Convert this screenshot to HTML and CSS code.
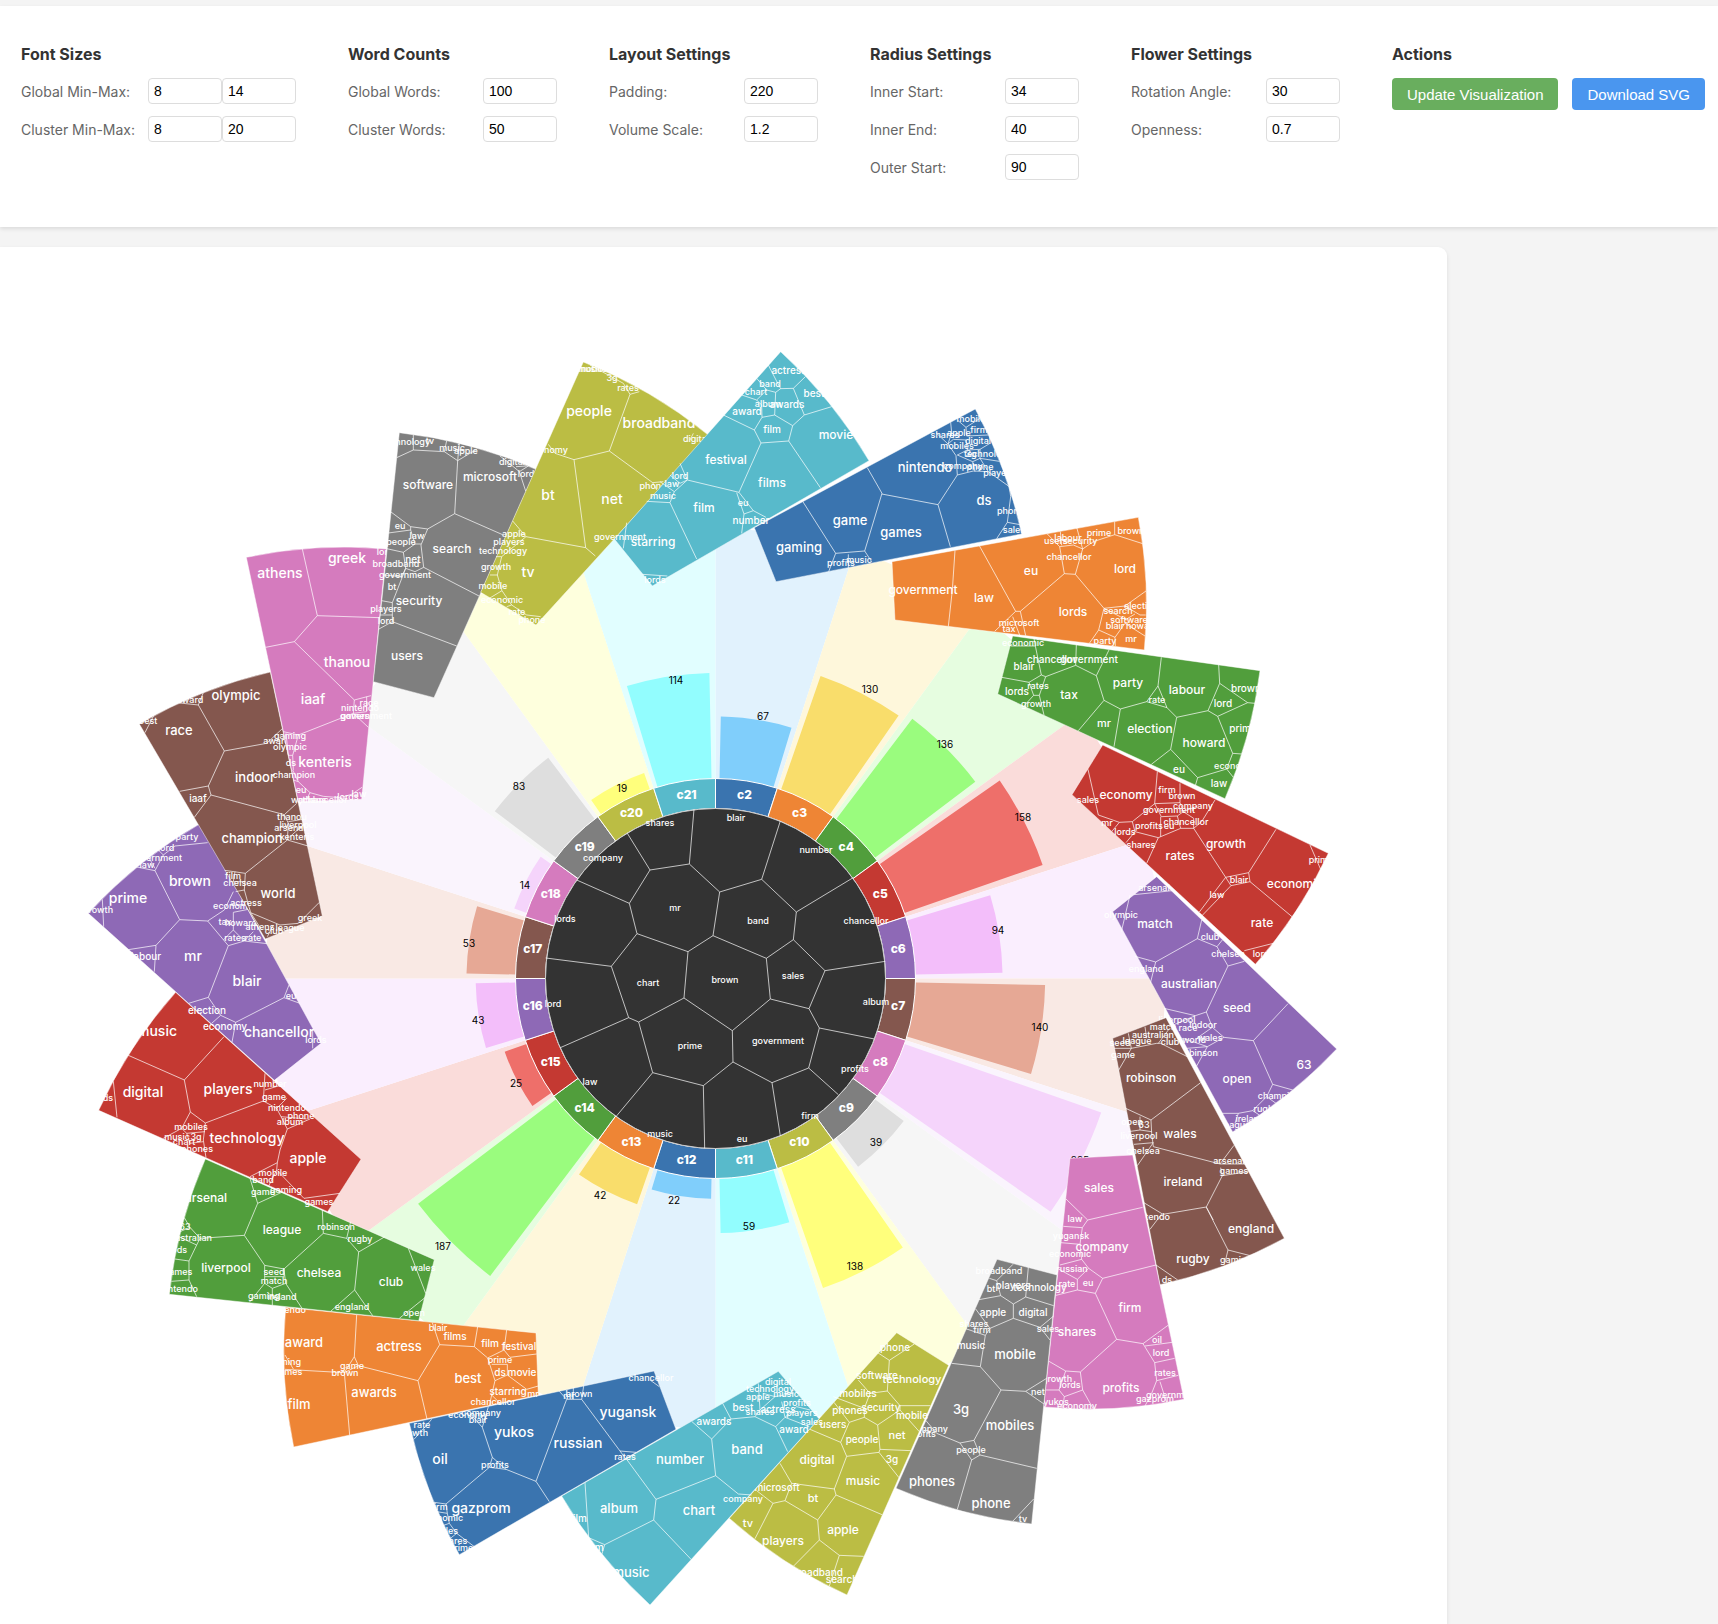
FILE: index.html
```
<!DOCTYPE html>
<html lang="en">
<head>
<meta charset="utf-8">
<meta name="viewport" content="width=device-width, initial-scale=1">
<title>Cluster Flower</title>
<link rel="stylesheet" href="styles.css">
</head>
<body>
<form class="controls">
  <section class="group group-wide">
    <h2>Font Sizes</h2>
    <div class="field">
      <label for="global-min">Global Min-Max:</label>
      <span class="pair"><input id="global-min" type="number" value="8"><input type="number" value="14" aria-label="Global maximum"></span>
    </div>
    <div class="field">
      <label for="cluster-min">Cluster Min-Max:</label>
      <span class="pair"><input id="cluster-min" type="number" value="8"><input type="number" value="20" aria-label="Cluster maximum"></span>
    </div>
  </section>
  <section class="group">
    <h2>Word Counts</h2>
    <div class="field"><label for="global-words">Global Words:</label><input id="global-words" type="number" value="100"></div>
    <div class="field"><label for="cluster-words">Cluster Words:</label><input id="cluster-words" type="number" value="50"></div>
  </section>
  <section class="group">
    <h2>Layout Settings</h2>
    <div class="field"><label for="padding">Padding:</label><input id="padding" type="number" value="220"></div>
    <div class="field"><label for="volume">Volume Scale:</label><input id="volume" type="number" step="0.1" value="1.2"></div>
  </section>
  <section class="group">
    <h2>Radius Settings</h2>
    <div class="field"><label for="inner-start">Inner Start:</label><input id="inner-start" type="number" value="34"></div>
    <div class="field"><label for="inner-end">Inner End:</label><input id="inner-end" type="number" value="40"></div>
    <div class="field"><label for="outer-start">Outer Start:</label><input id="outer-start" type="number" value="90"></div>
  </section>
  <section class="group">
    <h2>Flower Settings</h2>
    <div class="field"><label for="rotation">Rotation Angle:</label><input id="rotation" type="number" value="30"></div>
    <div class="field"><label for="openness">Openness:</label><input id="openness" type="number" step="0.1" value="0.7"></div>
  </section>
  <section class="actions">
    <h2>Actions</h2>
    <div class="buttons">
      <button type="button" class="button button-update">Update Visualization</button>
      <button type="button" class="button button-download">Download SVG</button>
    </div>
  </section>
</form>
<main class="panel">
  <svg id="flower" class="flower" viewBox="0 247 1447 1377" role="img" aria-label="Word clusters arranged as a flower"></svg>
</main>
<script src="app.js"></script>
</body>
</html>
```
FILE: styles.css
```
* {
  box-sizing: border-box;
}

body {
  margin: 0;
  padding-top: 6px;
  background: #f4f4f4;
  font-family: Inter, "Noto Sans", sans-serif;
  color: #333;
}

.controls {
  display: flex;
  flex-wrap: wrap;
  gap: 20px 52px;
  padding: 38px 8px 47px 21px;
  background: #fff;
  box-shadow: 0 2px 4px rgba(0, 0, 0, 0.1);
}

.group {
  display: flex;
  flex-direction: column;
  gap: 12px;
  width: 209px;
}

.group-wide {
  width: 275px;
}

h2 {
  margin: 0;
  font-size: 16px;
  line-height: 20px;
  font-weight: 700;
}

.group h2 {
  margin-bottom: 2px;
}

.field {
  display: flex;
  align-items: center;
  justify-content: space-between;
  height: 26px;
  font-size: 14px;
  color: #666;
}

.pair {
  display: flex;
}

input {
  width: 74px;
  height: 26px;
  padding: 0 5px;
  border: 1px solid #ddd;
  border-radius: 4px;
  background: #fff;
  color: #000;
  font: 14px "Liberation Sans", Arial, sans-serif;
  appearance: textfield;
}

.actions h2 {
  margin-bottom: 14px;
}

.buttons {
  display: flex;
  gap: 14px;
}

.button {
  height: 32px;
  padding: 0 15px;
  border: 0;
  border-radius: 4px;
  color: #fff;
  font: 15px "Liberation Sans", Arial, sans-serif;
}

.button-update {
  background: #69ae5e;
}

.button-download {
  background: #4a96ef;
}

.panel {
  margin: 20px 271px 0 0;
  background: #fff;
  border-radius: 0 9px 0 0;
  box-shadow: 0 2px 4px rgba(0, 0, 0, 0.1);
}

.flower {
  display: block;
  width: 100%;
  height: auto;
}

.flower text {
  text-anchor: middle;
}

.word {
  fill: #fff;
  font-weight: 500;
}

.cells {
  fill: none;
  stroke: rgba(255, 255, 255, 0.7);
  stroke-width: 3px;
}

.petal {
  stroke: rgba(255, 255, 255, 0.7);
  stroke-width: 2px;
}

.ring {
  stroke: #fff;
  stroke-width: 1px;
}

.ring-label {
  fill: #fff;
  font-size: 12px;
  font-weight: 800;
}

.value {
  fill: #000;
  font-size: 10px;
}

.hub {
  fill: #333;
  stroke: #ccc;
  stroke-width: 1px;
}
```
FILE: app.js
```
const CX = 715.5, CY = 978.5;
const INNER = 170, RING = 200, OUTER = 450, VALUE_SCALE = 0.9259, STEP = 18;

// ring colour, bar colour, background tint
const PALETTE = [
  ['#3a74af', '#80cefb', '#e1f2fd'],
  ['#ee8535', '#f9dd6b', '#fef7db'],
  ['#519e3c', '#9afc7e', '#e6fde0'],
  ['#c43932', '#ee6f6a', '#fadcda'],
  ['#8e69b6', '#f3befa', '#faeefe'],
  ['#84574e', '#e6a895', '#f9e9e4'],
  ['#d57bbe', '#f5d4fb', '#faf4fd'],
  ['#7f7f7f', '#dedede', '#f6f6f6'],
  ['#bbbd44', '#ffff7c', '#feffdd'],
  ['#58bacb', '#92fdfe', '#e1feff']
];

// value and label centre for each cluster, c2 first
const VALUES = [
  [67, 763, 716], [130, 870, 689], [136, 945, 744], [158, 1023, 817], [94, 998, 930],
  [140, 1040, 1027], [225, 1080, 1160], [39, 876, 1142], [138, 855, 1266], [59, 749, 1226],
  [22, 674, 1200], [42, 600, 1195], [187, 443, 1246], [25, 516, 1083], [43, 478, 1020],
  [53, 469, 943], [14, 525, 885], [83, 519, 786], [19, 622, 788], [114, 676, 680]
];

// origins of the drawing tiles; data inside a tile is in thirds of a unit
const TILES = {
  a: [80, 340], b: [480, 340], c: [880, 390], d: [80, 740], e: [500, 740],
  f: [910, 790], g: [140, 1150], h: [530, 1180], i: [880, 1160]
};

// each petal: tile of the outline, outline corners, then [tile, cell borders, words]
const PETALS = [
  ['b', [823, 563, 1486, 207, 1625, 582, 888, 725],
    ['b', 'M968 484L1067 640L1154 633L1206 460L1162 383M1067 640L1046 695M1105 643V684M1154 633L1175 665',
      'gaming 958 622 13;game 1110 541 13;music 1137 660;profits 1082 669'],
    ['c', 'M5 312L174 344L232 255L228 197L204 162L168 128M174 344L211 470M232 255L280 243L325 245L388 290L392 320L382 397L350 446M382 397L420 404M212 97L215 128L204 162L220 148L258 150L262 180L232 195L278 215L300 205L358 214M232 90L258 112L300 85M258 112L260 138L325 135M262 180L300 178L330 160M300 178V205L325 245M278 215L285 245',
      'nintendo 136 232 13;games 64 427 13;ds 311 330 13;mobile 272 87;apple 238 127;firm 296 119;shares 196 134;digital 294 153;mobiles 232 167;3g 272 191;technology 325 191;company 250 226;phone 300 231;players 356 248;phones 398 363;sales 402 420']],
  ['c', [36, 515, 775, 382, 793, 780, 45, 690],
    ['c', 'M225 482L217 600L205 709M298 467L407 664L421 664L553 551L586 553L672 655L656 720L628 760M407 664L344 724M398 680L420 738M421 664L437 737M553 551L539 470L500 430M586 553L608 477L590 412M539 470L580 465L608 477L640 455L704 434L788 461M704 434V395M672 655L735 648L798 603M735 648L780 675H797M735 690L765 672M656 720L705 742L735 700L795 738M705 742L706 768M672 655L740 690M541 425L545 466',
      'government 128 599 12;law 312 623 12;eu 452 542 12;lord 735 535 12;lords 578 664 12;users 528 453;labour 563 444;security 601 451;prime 657 428;brown 754 422;chancellor 568 499;search 713 663;election 784 648;software 746 690;blair 704 708;howard 785 708;mr 754 745;party 675 753;microsoft 417 699;tax 387 717']],
  ['c', [398, 738, 1140, 842, 1035, 1226, 353, 912],
    ['c', 'M365 862L447 877L484 855L466 768H392M466 768L462 745M484 855L497 860L587 826L649 857L687 780M587 826L589 765M447 877L461 916H478L497 860M461 916L430 950M478 916L492 975M649 857L672 931L721 957L800 935L834 888L844 802M672 931L595 1022M721 957L702 1070M834 888L861 953L800 935M861 953L890 982L984 962L1019 880L1016 825M1019 880L1103 938L1125 940M1103 938L1013 979L984 962M1013 979L1058 1090L1085 1092M890 982L872 1078L953 1163L1040 1137L1058 1090M872 1078L814 1123M953 1163L946 1187M1040 1137L1060 1162',
      'economic 430 759;chancellor 516 808 10;government 628 808 10;blair 431 829 10;tax 566 915 12;rates 474 888;growth 467 942;lords 412 905 10;party 744 879 12;labour 920 899 12;rate 832 930;mr 672 1000 11;election 809 1016 12;howard 971 1058 12;lord 1029 940 10;brown 1099 895 10;prime 1090 1015 10;eu 896 1138 10;economy 1062 1128;law 1016 1180 10']],
  ['f', [578, -135, 1255, 190, 1036, 523, 486, 14],
    ['f', 'M534 -62L565 75L628 97L667 95L734 41L742 -55M734 41L810 38L820 65L862 48M810 -20V38M667 95L675 125L745 143L812 115H851L875 95L915 30M851 115L947 262L1016 248L1098 118M947 262L868 366M1016 248L1020 275L963 287L875 378M947 262L963 287M1020 275L1146 380M1200 165L1232 238M1003 482L1090 460M745 143L710 220M628 97L605 125M675 125L648 158M752 80V140M734 41L754 80L802 78L812 115M802 78L820 65L851 85V115',
      'economy 648 15 12;growth 947 161 12;rates 811 197 12;rate 1056 398 12;economic 1156 281 12;sales 535 29;firm 772 0;brown 817 18;company 850 47;government 777 60;chancellor 827 96;profits 718 106;eu 777 108;mr 592 99;lords 644 126;shares 693 164;blair 987 270;law 920 315;prime 1233 210;lord 1052 491']],
  ['f', [740, 260, 1280, 777, 968, 1026, 608, 365],
    ['f', 'M672 314L787 302M660 315L634 425M675 499L737 516L862 446L875 390M737 516L721 580M862 446L921 470L937 450M921 470L954 528L1003 514M954 528L889 666L856 677L762 655M889 666L907 712L942 742L1030 752L1134 641M1030 752L1088 883L1148 900M1088 883L1070 920L1028 962L985 970H935M1070 920L1098 940M1028 962L1048 975M942 742L892 770L860 828M892 770L820 745M907 712L860 745M856 677L790 705M985 970L975 1000M830 775L892 770',
      'arsenal 733 294;olympic 632 375;match 736 401 12;club 899 440;chelsea 953 492;england 709 537;australian 836 581 12;seed 980 653 12;63 1182 824 12;open 981 865 12;liverpool 800 690;indoor 878 705;race 833 714;world 853 750;wales 900 744;robinson 866 789;champion 1108 918;rugby 1068 957;ireland 1020 987;league 978 1003']],
  ['f', [768, 683, 1123, 1345, 750, 1484, 608, 745],
    ['f', 'M612 775H664L740 760H752L832 800M664 775L625 842M647 955L723 990L872 878M723 990L725 1030L730 1070L930 1122L972 1066M930 1122H1005M932 1133L937 1157L1015 1145M937 1157L889 1251L759 1273L700 1237M889 1251L910 1290M672 1063L730 1058L682 1127M690 980V1020L655 1025M690 1020L725 1025M705 710L710 745M775 720L745 760M655 730L664 775',
      'match 760 711;australian 730 735;league 680 752;seed 631 759;club 780 756;game 639 795;robinson 723 862 12;wales 810 1031 12;open 667 996;63 703 1004;liverpool 688 1038;chelsea 700 1082;ireland 818 1174 12;arsenal 958 1113;games 972 1142'],
    ['i', 'M979 142L1044 270L1111 287M1044 270L1035 307M828 315L893 360M845 162L810 208',
      'england 1112 206 12;rugby 939 296 12;gaming 1068 300;ds 862 360;nintendo 812 171']],
  ['i', [758, -15, 912, 718, 491, 741, 570, -5],
    ['i', 'M558 117L623 180L788 142M623 180L607 203L550 199M607 203L600 253L543 248M600 253L605 298L540 315M605 298L626 325L668 355L828 315M626 325L592 358V390L528 406M592 358L532 325M592 390L646 400L668 355M646 400L710 538L789 551L864 496M710 538L601 636L557 633L507 604M557 633L537 690H497M601 636L608 690L553 710L537 690M553 710L548 743M608 690L640 747M789 551L824 608L830 662L895 646M795 558L877 547M824 608L884 595M830 662L815 700L795 738M840 665L860 728',
      'sales 658 83 12;law 584 177;yugansk 574 228;company 667 261 12;economic 569 282;russian 577 327;rate 561 372;eu 624 369;firm 750 443 12;shares 592 516 12;oil 831 540;lord 844 578;rates 855 639;profits 724 683 12;growth 530 657;lords 571 675;yukos 527 726;economy 592 738;government 875 705;gazprom 825 717']],
  ['i', [531, 345, 455, 1092, 48, 985, 351, 298],
    ['i', 'M399 313L350 362L328 355M350 362L362 407L297 419M445 322L437 411L521 437M362 407L400 432L437 411M400 432V475L330 505L316 526M400 475L480 502L521 468M480 502L510 540M287 447L330 505M257 506L316 526L301 620L215 610M301 620L363 690L437 694L500 655M437 694L492 732M363 690L282 841L300 885L470 925M282 841L240 849L275 900L300 885M240 849L170 820L138 782M275 900L232 1048M461 1017L398 1084',
      'broadband 356 333;players 399 377 10;technology 481 382 10;bt 334 386;apple 340 457 10;digital 460 457 10;shares 281 490;firm 307 510;sales 503 507;music 273 556 10;mobile 404 583 13;net 475 696;3g 244 748 13;mobiles 390 796 13;company 143 806;profits 125 822;people 274 870;phones 156 964 13;phone 333 1030 13;tv 429 1077']],
  ['h', [1256, 556, 951, 1245, 598, 1015, 1100, 458],
    ['h', 'M1043 518L1078 541L1153 492M1078 541L1072 633L1110 677H1201M1072 633L1020 640L985 600M1020 640L1003 685L910 650M1003 685V712L958 727L912 667M1003 712L1043 735L1110 690V677M1110 690L1168 755M1043 735L1050 808L1143 812M1050 808L1047 817L950 829L932 787L840 748M958 727L932 787M950 829L913 927L918 945L1056 1004M913 927L785 910L750 850M785 910L765 962L729 970L680 932M765 962L863 1020L918 945M863 1020L868 1080L928 1126L1001 1129M868 1080L791 1158M928 1126L898 1218M729 970L675 1076M1047 817L1107 893',
      'phone 1095 503 10;software 1040 587 10;technology 1146 597 11;mobiles 984 641 10;security 1052 682 10;phones 959 690 10;mobile 1147 705 10;users 909 733 10;people 997 778 10;net 1102 766 11;3g 1086 837 10;digital 860 839 12;music 998 903 12;bt 848 955 11;microsoft 740 922 10;tv 654 1030 11;players 758 1083 12;apple 939 1050 12;broadband 860 1177 10;search 937 1198 10']],
  ['h', [867, 716, 360, 1275, 95, 948, 745, 574],
    ['h', 'M578 670L603 717L675 710L690 690L685 610M603 717L545 777L486 725M545 777L557 887L378 958L290 838M557 887L625 942L665 945M378 958L371 1020L224 1094L176 1073L165 908M371 1020L484 1139M224 1094L215 1125M675 710L737 740L773 815M737 740L765 712L838 740M690 690L735 650L790 640M765 712L800 680L840 690M735 650L700 640M765 712L755 665',
      'digital 745 605;technology 719 627;music 769 640;apple 685 651;profits 800 668;best 638 682 10;shares 690 696;actress 744 688 10;players 815 699;sales 845 726;awards 551 724 10;award 793 748 10;number 450 837 13;band 652 807 13;chart 508 990 13;album 266 985 13;company 639 957;film 145 1015 10;firm 193 1102 10;music 302 1176 13']],
  ['h', [438, 748, -212, 1124, -362, 730, 372, 573],
    ['h', 'M161 618L155 658H110L88 634M155 658L270 813L318 817M270 813L290 840M110 658L18 904L58 965M360 600L388 620M130 622V658M18 904L-72 868',
      'chancellor 363 594;brown 147 642;mr 116 648;yugansk 295 695 14;russian 144 789 14;rates 285 831'],
    ['g', 'M875 808L822 868M990 790L1027 832L1057 922L1098 958M1057 922L1048 952L918 1062L882 1057M1048 952L1098 958M918 1062L922 1090L890 1085M922 1090L928 1120L905 1128M928 1120L950 1150L925 1170M950 1150L1003 1190M1027 832L1045 770',
      'yukos 1123 846 14;oil 899 927 14;gazprom 1023 1074 14;profits 1064 945;economy 984 793;company 1023 787;blair 1013 810;rate 845 825;growth 819 847;firm 898 1071;economic 907 1104;sales 922 1143;shares 940 1173;prime 962 1193']],
  ['g', [1195, 735, 461, 891, 437, 472, 1188, 549],
    ['g', 'M650 495L643 620L655 647L834 692L899 584L877 518M899 584L1003 590L1013 530M1003 590L1043 624L1065 692L1055 735L1048 768M834 692L861 807M613 668L629 855M435 658L613 668L643 620M1100 540L1092 600L1110 622L1190 612M1092 600L1043 624M1055 643H1102V675L1065 692M1102 675L1160 718L1195 708M1055 735L1085 765M435 615L460 657M613 668L655 647',
      'nintendo 441 480;award 493 577 13;actress 778 588 13;awards 702 726 13;best 984 684 13;film 478 762 13;game 635 646;brown 614 669;gaming 436 636;games 444 666;blair 895 534;films 945 559 10;film 1050 580 10;festival 1136 588 10;prime 1080 630;ds 1080 666 10;movie 1145 666 10;starring 1105 724 10;mr 1178 730;chancellor 1058 756']],
  ['g', [836, 512, 88, 433, 196, 27, 883, 329],
    ['g', 'M313 256L180 265L150 232L133 203M313 256L353 160L330 85M353 160L425 127M180 265L170 285L120 262M170 285L147 333L104 327M147 333V390L94 394M147 390L170 440M313 256L374 346L432 357L550 250L547 180M550 250L620 265L656 306L735 260M620 265L632 215M656 306L644 420L698 497M644 420L572 484M374 346V400L328 457M374 380H432V357L437 400L397 415L374 400M397 415V467M437 400L486 475M805 295L857 430M855 443L778 505M150 232L120 245',
      'arsenal 199 144 12;league 427 240 12;liverpool 257 354 12;chelsea 536 369 12;club 753 396 12;robinson 589 231;rugby 661 267;wales 849 354;open 822 489;england 637 471;seed 403 366;match 401 393;gaming 372 438;ireland 427 441;game 370 126;63 135 231;australian 152 264;ds 125 300;games 115 366;nintendo 118 417']],
  ['d', [743, 1415, 56, 1111, 287, 757, 843, 1258],
    ['d', 'M145 946L313 1020L432 890M313 1020L331 1116L376 1149L550 1083L555 1000M100 1024L111 1132M331 1116L305 1165L250 1195M376 1149L370 1200L378 1253M550 1083L590 1105L603 1130L680 1137M555 1050L605 1035M590 1105L620 1075M603 1130L622 1167L600 1230L592 1268M622 1167L690 1137M305 1165L320 1180L375 1175M320 1180L330 1210L370 1205',
      'music 231 873 14;digital 190 1056 14;players 444 1047 14;technology 500 1194 14;apple 683 1252 14;ds 85 1073;number 571 1031;game 582 1070;nintendo 622 1103;phone 664 1127;album 629 1146;mobiles 333 1161;music 290 1191;3g 347 1191;chart 313 1204;phones 350 1226'],
    ['g', 'M412 38L330 80M412 38L410 60L385 110M410 60L492 145L600 130',
      'mobile 399 69;band 369 89;gaming 437 119;games 536 155']],
  ['d', [583, 1021, 25, 520, 362, 250, 723, 910],
    ['d', 'M383 308L285 318L250 345L225 392L299 539L383 543L433 510L460 455M225 392L165 380M250 345L235 330M225 385L205 350M299 539L228 616L145 629M228 616L223 695M383 543L445 617L385 772L326 790M445 617L493 603L562 611M460 517V570L430 600M460 570L493 603L520 575M460 517L520 505M385 772L422 826L467 847L612 773L660 790M612 773L627 735M422 826L395 850M467 847L456 907M67 478L71 560M698 870V925',
      'party 321 291;lord 257 324;government 229 354;law 200 375;brown 329 423 14;prime 145 474 14;growth 54 510;economy 458 497;tax 434 546;howard 482 547;rates 464 594;rate 520 594;labour 198 650 10;mr 340 648 14;blair 502 723 14;eu 634 768;election 382 812 10;economy 434 860 10;chancellor 598 876 14;lords 709 900']],
  ['d', [556, 597, 178, -48, 571, -204, 727, 528],
    ['a', 'M195 1178L222 1125M370 1058L355 1095L290 1088M355 1095L433 1233L560 1210L608 1165',
      'olympic 468 1066 13;race 296 1171 13;award 331 1080;best 205 1143'],
    ['d', 'M433 33L385 138L393 165L343 232M385 138L299 154M393 165L613 224L650 190M613 224L625 250L622 300L684 318M622 300L496 400L434 391M496 400L493 450L512 518L600 555L655 550L718 487M493 450L467 455M512 518L545 570M580 555L562 590M625 245L668 238M630 290L675 250M465 395L460 425H495',
      'indoor 525 112 13;awards 598 3;champion 515 295 13;world 595 460 13;iaaf 354 176 10;thanou 637 231;liverpool 655 255;arsenal 630 264;kenteris 650 291;film 459 408;chelsea 481 429;actress 497 489;greek 690 534;athens 541 561;league 630 564;club 583 573']],
  ['a', [655, 1385, 499, 652, 919, 627, 845, 1378],
    ['a', 'M667 627L712 827L898 833M712 827L643 905L557 922M643 905L823 1080L873 1067M823 1080L820 1120L865 1162M820 1120L655 1185L610 1175M655 1185L638 1246L640 1290M860 1070V1115L820 1120M618 1180L625 1246H638',
      'athens 600 697 14;greek 800 654 14;thanou 801 965 14;iaaf 700 1076 14;race 866 1089;nintendo 840 1104;government 857 1128;games 825 1128;gaming 631 1188;olympic 631 1221;ds 632 1269;kenteris 736 1266 14;lord 914 636'],
    ['d', 'M638 90L655 125L690 158L730 169L780 173L815 163L846 142M655 125L640 120M690 158L680 178',
      'champion 642 105;eu 664 150;world 668 180;athens 695 178;chancellor 735 178;lords 803 171;law 838 162']],
  ['a', [880, 1025, 958, 278, 1368, 388, 1062, 1073],
    ['a', 'M950 353L1000 330L1093 335L1133 362L1190 328M1000 330V284M1093 335L1100 302M1133 362L1124 521L1043 567L992 560L933 516M1133 362L1138 308M1124 521L1270 585M1043 567L1023 615L1031 682L1197 768M992 560V570L925 579M992 570L1005 612H1023M1005 612L970 637L920 626M970 637L977 685L1005 695L1031 682M977 685L937 788L905 782M937 788V845L1130 918M937 845L895 868M977 685L965 710L910 705M900 825H937',
      'technology 979 305;tv 1049 303;music 1117 324;apple 1158 333;software 1044 433 12;search 1115 626 12;security 1018 783 12;users 981 947 12;microsoft 1231 411 12;eu 960 557;law 1012 588;people 962 606;net 1000 657 10;broadband 947 671;government 975 705;bt 936 740;players 919 807;lord 918 843'],
    ['b', 'M60 348L82 365L118 395L137 453M108 380L140 378M118 395L145 378',
      'digital 95 366;lord 137 402']],
  ['b', [2, 757, 310, 66, 686, 286, 168, 855],
    ['b', 'M205 313L225 340L282 359L388 333L450 163L478 155M450 163L430 130L330 75M388 333L518 428L550 425M518 428L530 450M282 359L317 623L346 648M317 623L138 590L98 543M138 590L65 650H48M65 650L52 705L66 752L28 775M52 705H30M66 752L95 795L140 825L182 830M95 795L80 800M640 280L630 300',
      'people 328 213 14;broadband 538 249 14;bt 204 465 14;net 395 477 14;tv 144 696 14;music 330 87;mobiles 345 87;3g 397 112;rates 445 144;digital 648 297;economy 203 330;apple 103 582;players 87 606;technology 68 633;growth 49 681;mobile 39 738;economic 66 779;rate 110 816;phone 156 840;phone 520 438']],
  ['b', [403, 597, 902, 35, 1167, 362, 517, 738],
    ['b', 'M865 75L888 120L902 146L940 145L976 110M830 115L860 150L887 157L902 146M940 145L973 225L1055 200M973 225L938 257L884 225L887 157M938 257L926 303L1021 443M926 303L843 309L823 270L846 232L884 225M846 232L845 195L830 180L860 150M823 270L730 225M785 165L830 180M843 309L777 457L622 420L600 370M770 458L792 522L785 580M777 457L820 512L858 532M792 522L820 512M622 420L583 455L540 425M583 455L570 488L500 484M570 488L650 657M570 405L600 430L622 420M440 548L430 625M487 703L562 708',
      'actress 928 92 10;band 869 131;chart 827 156;best 1003 160 10;album 865 191;awards 921 193 10;award 802 215 10;film 876 268 10;movie 1069 284 12;festival 738 359 12;films 875 428 12;film 672 502 12;starring 520 605 12;lord 600 408;law 576 432;music 549 467;eu 789 489;number 814 540 10;lords 524 720;government 421 591']]
];

const HUB = ['e', 'M582 208L568 372L659 456L639 587L564 635L411 581L388 490L450 390L568 372M450 390L382 280M388 490L230 420M659 456L785 418L841 243M785 418L889 516L1058 414M889 516L880 599L975 692L1156 664M880 599L799 655L639 587M799 655L811 777L927 806L975 692M927 806L958 864L1123 897M958 864L926 984L1015 1064M926 984L816 1028L841 1188M816 1028L699 966L697 872L811 777M697 872L552 774L564 635M552 774L416 846L386 833L334 679L411 581M334 679L137 654M386 833L181 923M416 846L458 998L347 1131M458 998L610 1037L699 966M610 1037L614 1225',
  'blair 708 234;shares 479 249;number 949 330;company 309 354;mr 525 504;band 775 542;lords 195 537;chancellor 1099 543;chart 443 729;brown 676 720;sales 878 708;album 1129 786;lord 160 792;prime 571 918;government 833 903;law 270 1026;profits 1064 987;music 481 1182;eu 727 1197;firm 929 1128'];

const svg = document.getElementById('flower');

function add(parent, name, attrs, text) {
  const node = document.createElementNS('http://www.w3.org/2000/svg', name);
  for (const key in attrs) node.setAttribute(key, attrs[key]);
  if (text !== undefined) node.textContent = text;
  parent.appendChild(node);
  return node;
}

function point(radius, degrees) {
  const a = degrees * Math.PI / 180;
  return [(CX + radius * Math.sin(a)).toFixed(1), (CY - radius * Math.cos(a)).toFixed(1)];
}

function sector(r0, r1, from, to) {
  return `M${point(r0, from)}L${point(r1, from)}A${r1} ${r1} 0 0 1 ${point(r1, to)}` +
    `L${point(r0, to)}A${r0} ${r0} 0 0 0 ${point(r0, from)}Z`;
}

function tileTransform(key) {
  return `translate(${TILES[key].join(' ')}) scale(0.33333)`;
}

function drawPart(parent, [tile, cells, words]) {
  const [ox, oy] = TILES[tile];
  add(parent, 'path', { class: 'cells', d: cells, transform: tileTransform(tile) });
  for (const entry of words.split(';')) {
    const [word, x, y, size = 9] = entry.split(' ');
    add(parent, 'text', {
      class: 'word', x: Math.round(ox + x / 3), y: Math.round(oy + y / 3 + size * 0.37), 'font-size': size
    }, word);
  }
}

VALUES.forEach((v, i) => {
  add(svg, 'path', { d: sector(RING, OUTER, i * STEP, (i + 1) * STEP), fill: PALETTE[i % 10][2] });
});
VALUES.forEach(([value, x, y], i) => {
  const radius = RING + value * VALUE_SCALE;
  add(svg, 'path', { d: sector(RING, radius, i * STEP + 1.15, (i + 1) * STEP - 1.15), fill: PALETTE[i % 10][1] });
  add(svg, 'text', { class: 'value', x, y: y + 4 }, value);
});
VALUES.forEach((v, i) => {
  add(svg, 'path', { class: 'ring', d: sector(INNER, RING, i * STEP, (i + 1) * STEP), fill: PALETTE[i % 10][0] });
  const [x, y] = point(185, (i + 0.5) * STEP);
  add(svg, 'text', { class: 'ring-label', x, y: +y + 3 }, 'c' + (i + 2));
});
PETALS.forEach(([tile, p, ...parts], i) => {
  const group = add(svg, 'g', {});
  add(group, 'path', {
    class: 'petal', fill: PALETTE[i % 10][0], transform: tileTransform(tile),
    d: `M${p[0]} ${p[1]}L${p[2]} ${p[3]}A1410 1410 0 0 1 ${p[4]} ${p[5]}L${p[6]} ${p[7]}Z`
  });
  parts.forEach(part => drawPart(group, part));
});
add(svg, 'circle', { class: 'hub', cx: CX, cy: CY, r: INNER });
drawPart(svg, HUB);
```
